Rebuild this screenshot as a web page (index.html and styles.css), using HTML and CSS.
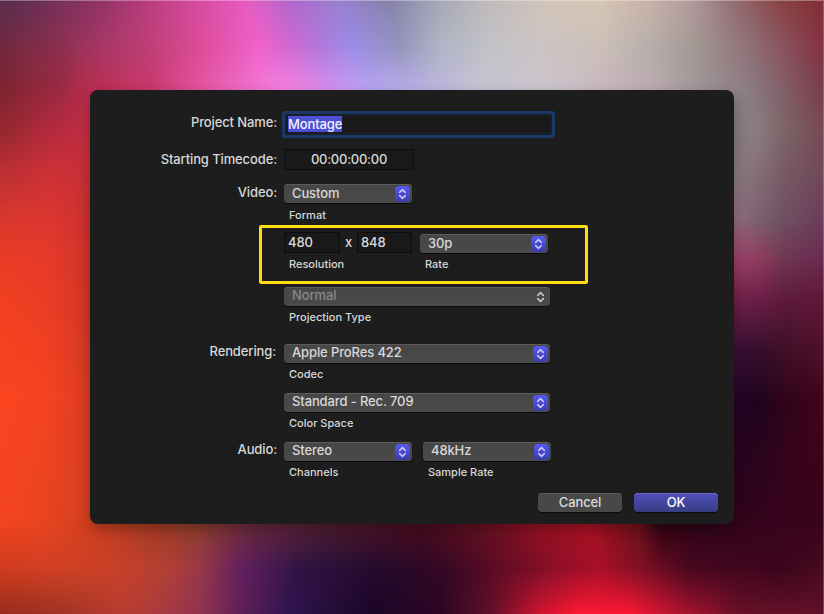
FILE: index.html
```
<!DOCTYPE html>
<html lang="en">
<head>
<meta charset="utf-8">
<title>Project Settings</title>
<link rel="stylesheet" href="styles.css">
</head>
<body>
<div class="wallpaper" aria-hidden="true">
  <i class="band b0"></i><i class="band b1"></i><i class="band b2"></i><i class="band b3"></i><i class="band b4"></i><i class="band b5"></i><i class="band b6"></i><i class="band b7"></i><i class="band b8"></i><i class="band b9"></i><i class="band b10"></i><i class="band b11"></i><i class="band b12"></i><i class="edge"></i>
</div>
<svg class="defs" width="0" height="0" aria-hidden="true"><symbol id="arrows" viewBox="0 0 15 16"><path d="M4.7 6.4 7.5 3.6l2.8 2.8M4.7 9.6l2.8 2.8 2.8-2.8" fill="none" stroke="currentColor" stroke-width="1.5" stroke-linecap="round" stroke-linejoin="round"/></symbol></svg>
<main class="dialog">
  <div class="row name-row"><span class="label">Project Name:</span><div class="name"><span class="selection">Montage</span></div></div>
  <div class="row time-row"><span class="label">Starting Timecode:</span><div class="field time"><span>00:00:00:00</span></div></div>
  <div class="row video-row"><span class="label">Video:</span>
    <div class="group short"><div class="select"><span>Custom</span><svg class="arrows"><use href="#arrows"/></svg></div><span class="caption">Format</span></div>
  </div>
  <section class="highlight">
    <div class="group resolution"><div class="sizes"><div class="field size"><span>480</span></div><span class="times">x</span><div class="field size"><span>848</span></div></div><span class="caption">Resolution</span></div>
    <div class="group rate"><div class="select"><span>30p</span><svg class="arrows"><use href="#arrows"/></svg></div><span class="caption">Rate</span></div>
  </section>
  <div class="row projection-row"><span class="label"></span>
    <div class="group wide"><div class="select disabled"><span>Normal</span><svg class="arrows"><use href="#arrows"/></svg></div><span class="caption">Projection Type</span></div>
  </div>
  <div class="row codec-row"><span class="label rendering">Rendering:</span>
    <div class="group wide"><div class="select"><span>Apple ProRes 422</span><svg class="arrows"><use href="#arrows"/></svg></div><span class="caption">Codec</span></div>
  </div>
  <div class="row color-row"><span class="label"></span>
    <div class="group wide"><div class="select"><span>Standard - Rec. 709</span><svg class="arrows"><use href="#arrows"/></svg></div><span class="caption">Color Space</span></div>
  </div>
  <div class="row audio-row"><span class="label">Audio:</span>
    <div class="group short"><div class="select"><span>Stereo</span><svg class="arrows"><use href="#arrows"/></svg></div><span class="caption">Channels</span></div>
    <div class="group sample"><div class="select"><span>48kHz</span><svg class="arrows"><use href="#arrows"/></svg></div><span class="caption">Sample Rate</span></div>
  </div>
  <div class="actions"><button>Cancel</button><button class="primary">OK</button></div>
</main>
</body>
</html>
```
FILE: styles.css
```
* { box-sizing: border-box; }
body { margin: 0; width: 824px; height: 614px; overflow: hidden; padding: 90px; font: 550 13px/16px Inter, sans-serif; letter-spacing: -0.12px; color: #d8d8d8; background: #3d0c20; }
.defs { position: absolute; }

/* Each band fades into the next one, forming a smooth colour mesh. */
.wallpaper { position: absolute; inset: 0; z-index: -1; }
.edge { position: absolute; inset: 0; border-top: 1px solid #ffffff50; border-right: 1px solid #ffffff38; }
.band { position: absolute; inset: 0; -webkit-mask-image: linear-gradient(transparent var(--a), #000 var(--b)); mask-image: linear-gradient(transparent var(--a), #000 var(--b)); }
.b0 { --a: -1px; --b: 0px; background: linear-gradient(90deg, #5a2e4e, #6e3058 45px, #963468 105px, #bc3c80 150px, #d84ca4 200px, #e85cc0 248px, #b068cc 290px, #9880d0 340px, #8682ac 390px, #a6a8b8 440px, #bcb8bc 480px, #d4c6ba 550px, #d6c6b6 600px, #c8b2a6 650px, #b49ca0 690px, #967078 730px, #884444 780px, #842c34); }
.b1 { --a: 0px; --b: 45px; background: linear-gradient(90deg, #6e283e, #8c3050 60px, #a83868 105px, #c04078 150px, #dc4c98 200px, #f062cc 260px, #d068d0 290px, #b078dc 320px, #9c8ce8 350px, #9494bc 400px, #b0b4c4 440px, #c2c2c6 490px, #ccc4c4 540px, #ccc0b8 600px, #b8aeac 650px, #a09690 700px, #906f78 750px, #843040); }
.b2 { --a: 45px; --b: 90px; background: linear-gradient(90deg, #7e2430, #9c2a42 60px, #b82c4c 90px, #c8386c 150px, #e454a0 200px, #f47cdc 270px, #f682e2 290px, #d490ee 330px, #b8a4f4 370px, #b8b0e4 420px, #c6c4d4 480px, #ccc4cc 550px, #c8b8c0 600px, #bcacb0 650px, #a09498 700px, #8a7c80 750px, #783c4c); }
.b3 { --a: 90px; --b: 130px; background: linear-gradient(90deg, #94282f, #b42a3e 50px, #c22e44 90px, #867a7e 734px, #8a7e80 757px, #7c6468 785px, #784854); }
.b4 { --a: 130px; --b: 170px; background: linear-gradient(90deg, #b83034, #cc3038 50px, #c83038 90px, #887c7e 734px, #867078 757px, #785a64 785px, #704858); }
.b5 { --a: 170px; --b: 220px; background: linear-gradient(90deg, #d8382c, #de3630 50px, #ca302e 90px, #946c80 734px, #7c6070 757px, #6e5062 785px, #6c3c5c); }
.b6 { --a: 220px; --b: 260px; background: linear-gradient(90deg, #ea3c26, #e63a2a 50px, #ce342a 90px, #9c4068 734px, #903c60 757px, #703650 785px, #6a2850); }
.b7 { --a: 260px; --b: 300px; background: linear-gradient(90deg, #f14022, #ea3d26 50px, #d03626 90px, #702048 734px, #6c1e48 757px, #5c1a3c 785px, #601838); }
.b8 { --a: 300px; --b: 350px; background: linear-gradient(90deg, #f64220, #f04023 50px, #d43924 90px, #3c1036 734px, #360e2e 757px, #401028 785px, #50102a); }
.b9 { --a: 350px; --b: 400px; background: linear-gradient(90deg, #fa4520, #f44321 50px, #da3c22 90px, #240628 734px, #20041e 757px, #30041c 785px, #440418); }
.b10 { --a: 400px; --b: 522px; background: linear-gradient(90deg, #f44420, #e84420 45px, #d4401f 85px, #a43a20 150px, #8a3c2a 200px, #64283c 260px, #521e30 320px, #480d1e 420px, #621122 480px, #961122 540px, #a81122 590px, #66111a 640px, #2c0411 660px, #2c0418 700px, #38041e 780px, #38041a); }
.b11 { --a: 522px; --b: 568px; background: linear-gradient(90deg, #d03c20, #d04024 60px, #c84028 120px, #b04038 170px, #983848 200px, #642060 240px, #301444 300px, #240a2c 380px, #340824 440px, #580c24 490px, #901028 560px, #a81028 600px, #801024 640px, #480820 690px, #3c061c 780px, #480a20); }
.b12 { --a: 568px; --b: 614px; background: linear-gradient(90deg, #982c1c, #a03424 60px, #b83c30 120px, #b03c3c 150px, #903450 200px, #602058 240px, #301450 290px, #1c0628 370px, #2c0624 440px, #601028 490px, #d01430 540px, #ff1834 580px, #fa1834 630px, #b01430 680px, #681028 740px, #601028); }

.dialog { width: 644px; height: 434px; padding-top: 21px; background: #1d1d1d; border-radius: 8px; box-shadow: 0 5px 14px #0004; }
.row { display: flex; align-items: flex-start; }
.label { width: 187px; margin-right: 7px; text-align: right; }
.name-row { height: 38px; }
.name-row .label { margin: 3px 5px 0 0; }
.name { width: 273px; height: 27px; padding: 2px 3px; background: #191919; border: 3px solid #1b3765; border-radius: 3px; box-shadow: inset 0 0 0 2px #18202b; line-height: 15px; }
.selection { display: inline-block; height: 16px; background: #4d4fd5; color: #f0f0ff; line-height: 16px; }
.time-row { height: 35px; }
.time-row .label { margin-top: 2px; }
.field { height: 21px; border: 1px solid #0c0c0c; background: #191919; line-height: 18px; }
.time { width: 130px; text-align: center; letter-spacing: -0.25px; }
.video-row { height: 41px; }
.audio-row .label, .rendering { margin-top: -1px; }
.group { display: flex; flex-direction: column; }
.short { width: 128px; }
.wide { width: 266px; }
.sample { width: 128px; margin-left: 11px; }
.select { height: 19px; padding: 0 2px 0 8px; display: flex; justify-content: space-between; align-items: flex-start; border-radius: 4px; background: linear-gradient(#464646, #4a4a4a); box-shadow: inset 0 1px #5c5c5c, 0 1px 1px #0b0b0b; line-height: 17px; }
.video-row .select, .rate .select { line-height: 18px; }
.arrows { width: 15px; height: 16px; margin-top: 2px; border-radius: 4px; color: #c9c9ff; background: linear-gradient(#5659f5, #3b3caa); }
.disabled { color: #888; }
.disabled .arrows { color: #c8c8c8; background: none; }
.caption { height: 13px; margin: 5px 0 0 5px; font-size: 11px; line-height: 13px; letter-spacing: 0; }
.video-row .caption { margin-top: 6px; }
.highlight { width: 329px; height: 59px; margin-left: 169px; padding: 4px 0 0 22px; display: flex; border: 3px solid #ffdb16; border-radius: 2px; }
.resolution { width: 128px; }
.sizes { display: flex; justify-content: space-between; }
.size { width: 56px; padding-left: 3px; }
.size + .times + .size { width: 55px; }
.times { padding-top: 2px; }
.resolution .caption { margin-top: 5px; }
.rate { width: 128px; margin: 2px 0 0 8px; }
.projection-row { margin-top: 3px; height: 57px; }
.codec-row, .color-row { height: 49px; }
.rendering { width: 186px; margin-right: 8px; }
.audio-row { height: 51px; }
.actions { display: flex; justify-content: flex-end; gap: 12px; padding-right: 16px; }
.actions button { width: 84px; height: 19px; padding: 0; border: 0; border-radius: 4px; background: #484848; box-shadow: inset 0 1px #5c5c5c, 0 1px 1px #0b0b0b; color: #dcdcdc; font: 550 13px/19px Inter, sans-serif; letter-spacing: -0.12px; }
.actions .primary { color: #fff; background: linear-gradient(#4e50bd, #383c80); box-shadow: inset 0 1px #686ac8, 0 1px 1px #0b0b0b; }
```
